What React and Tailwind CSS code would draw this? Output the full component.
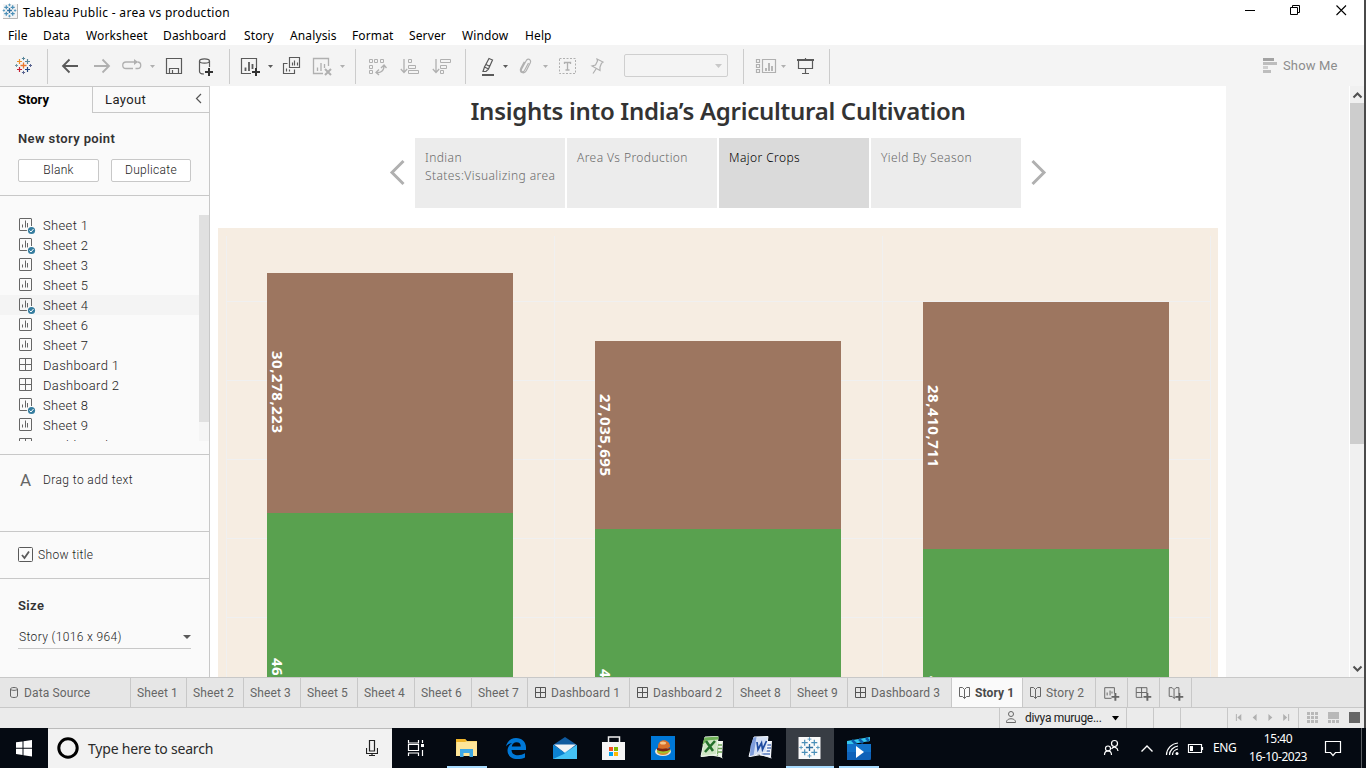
import React from "react";

/* Draws in window coordinates: x, y, w, h is the part of the window the drawing takes. */
function Art({ x, y, w, h, children, className = "" }) {
  return (
    <svg width={w} height={h} viewBox={`${x} ${y} ${w} ${h}`} fill="none" className={"block shrink-0 " + className}>
      {children}
    </svg>
  );
}

const DARK = "#5a5a5a";
const DIM = "#b0b0b0";

const Plus = ({ x, y, r, c, s = 1 }) => (
  <path d={`M${x - r} ${y}H${x + r}M${x} ${y - r}V${y + r}`} stroke={c} strokeWidth={s} />
);
const Caret = ({ x, c = DIM, y = 65 }) => <path d={`M${x - 2.5} ${y}h5l-2.5 3z`} fill={c} />;
const Sep = ({ x }) => <path d={`M${x} 49V84`} stroke="#cccccc" />;

function TableauMark({ x, y, k = 1, blue }) {
  const cs = blue
    ? ["#2f6f9f", "#4a8fb8", "#4a8fb8", "#4a8fb8", "#4a8fb8", "#5c9cc0", "#5c9cc0", "#5c9cc0", "#5c9cc0"]
    : ["#e8762c", "#eb912c", "#5b879b", "#c72035", "#1f457e", "#59879b", "#7199a6", "#5b6591", "#5b6591"];
  return (
    <g>
      <Plus x={x} y={y} r={3 * k} c={cs[0]} s={1.3} />
      <Plus x={x - 4 * k} y={y - 4 * k} r={2.5 * k} c={cs[1]} s={1.2} />
      <Plus x={x + 4 * k} y={y - 4 * k} r={2.5 * k} c={cs[2]} s={1.2} />
      <Plus x={x - 4 * k} y={y + 4 * k} r={2.5 * k} c={cs[3]} s={1.2} />
      <Plus x={x + 4 * k} y={y + 4 * k} r={2.5 * k} c={cs[4]} s={1.2} />
      <Plus x={x} y={y - 7 * k} r={1.6 * k} c={cs[5]} />
      <Plus x={x - 7 * k} y={y} r={1.5 * k} c={cs[6]} />
      <Plus x={x + 7 * k} y={y} r={1.5 * k} c={cs[7]} />
      <Plus x={x} y={y + 7 * k} r={1.6 * k} c={cs[8]} />
    </g>
  );
}

function TitleBar() {
  return (
    <div className="flex h-[25px] items-start bg-white">
      <Art x={0} y={0} w={23} h={25}>
        <rect x="3" y="4" width="15" height="15" fill="#f4f4f4" />
        <path d="M17.5 4V18.5H3" stroke="#b5b5b5" />
        <TableauMark x={9.5} y={10.5} k={0.8} blue />
      </Art>
      <span className="h-[25px] leading-[26px] text-[12px] tracking-[0.026em] text-black">Tableau Public - area vs production</span>
      <div className="flex-1" />
      <Art x={1236} y={0} w={128} h={25}>
        <path d="M1245 10.5h10" stroke="#000" />
        <path d="M1290.5 7.5h7v7h-7zM1292.500 7.500V5.500h7v7h-2" stroke="#000" />
        <path d="M1336.500 5.500l9.500 9.500M1346 5.500l-9.500 9.500" stroke="#000" strokeWidth="1.1" />
      </Art>
    </div>
  );
}

const menus = [
  ["File", "w-[35px]"], ["Data", "w-[43px]"], ["Worksheet", "w-[77px]"], ["Dashboard", "w-[81px]"],
  ["Story", "w-[46px]"], ["Analysis", "w-[62px]"], ["Format", "w-[57px]"], ["Server", "w-[53px]"],
  ["Window", "w-[63px]"], ["Help", "w-[40px]"],
];

function MenuBar() {
  return (
    <div className="flex h-5 bg-white pl-2 text-[12px] leading-[22px] tracking-[0.01em] text-black">
      {menus.map(([m, w]) => <span key={m} className={w}>{m}</span>)}
    </div>
  );
}

function Toolbar() {
  return (
    <div className="flex h-[41px] items-center bg-[#f4f4f4]">
      <Art x={0} y={45} w={48} h={41}><TableauMark x={23.5} y={65.5} /><Sep x={47.5} /></Art>
      <Art x={48} y={45} w={37} h={41}>
        <path d="M62.500 66H78M69.500 59.500L63 66l6.500 6.500" stroke={DARK} strokeWidth="1.800" />
      </Art>
      <Art x={85} y={45} w={33} h={41}>
        <path d="M94 66h15.500M102.500 59.500L109 66l-6.500 6.500" stroke={DIM} strokeWidth="1.800" />
      </Art>
      <Art x={118} y={45} w={40} h={41}>
        <path d="M135.500 68.500h2a3 3 0 0 0 0-6.500M137 62h-11a3.200 3.200 0 0 0 0 6.500h7" stroke={DIM} strokeWidth="1.300" />
        <path d="M134 59l4 3-4 3z" fill={DIM} /><Caret x={152.500} />
      </Art>
      <Art x={158} y={45} w={32} h={41}>
        <path d="M166.500 58.500h15v15h-15zM169.500 73.500v-5h9v5M172.500 73v-3" stroke={DARK} strokeWidth="1.200" />
      </Art>
      <Art x={190} y={45} w={40} h={41}>
        <path d="M199.500 61v10.500c0 1.500 2 2.500 4.500 2.500M209.500 61v6" stroke={DARK} strokeWidth="1.200" />
        <ellipse cx="204.500" cy="61" rx="5" ry="2.200" stroke={DARK} strokeWidth="1.200" />
        <Plus x={209} y={72} r={4} c="#333" s={2} /><Sep x={229.500} />
      </Art>
      <Art x={230} y={45} w={46} h={41}>
        <path d="M251 73.500h-9.500v-15h15V68" stroke={DARK} strokeWidth="1.200" />
        <path d="M245.500 71v-3.500M249 71v-9M252.500 69v-5" stroke={DARK} strokeWidth="1.800" />
        <Plus x={256} y={72} r={4} c="#333" s={2} /><Caret x={270.500} c={DARK} />
      </Art>
      <Art x={276} y={45} w={32} h={41}>
        <path d="M289.500 57.500h10v10h-10zM287.500 63.500h-4v10h11v-4M286.500 71.500v-3M289.500 71.500v-2M292.500 65.500v-3M294.500 65.500v-5M297.500 65.500v-3" stroke={DARK} strokeWidth="1.150" />
      </Art>
      <Art x={308} y={45} w={48} h={41}>
        <path d="M323 73.500h-9.500v-15h15V66M317.500 71v-3.500M321 71v-8M324.500 68v-4" stroke={DIM} strokeWidth="1.300" />
        <path d="M325 69l6 6M331 69l-6 6" stroke={DIM} strokeWidth="2" /><Caret x={342.500} /><Sep x={355.500} />
      </Art>
      <Art x={356} y={45} w={36} h={41}>
        <path d="M369.500 59.500h3v3h-3zM374.500 59.500h3v3h-3zM380.500 59.500h3v3h-3zM369.500 65.500h3v3h-3zM369.500 70.500h3v3h-3z" stroke={DIM} />
        <path d="M376 72.500c4 .5 8-1 8-6.500M381 68l3-3 2.500 3M379 69.500l-3 3 3 2.500" stroke={DIM} strokeWidth="1.300" />
      </Art>
      <Art x={392} y={45} w={33} h={41}>
        <path d="M404 59v13M400.800 69l3.200 3.500 3.200-3.500" stroke={DIM} strokeWidth="1.300" />
        <path d="M408.500 59.500h3v3h-3zM408.500 65.500h7v3h-7zM408.500 70.500h10v3h-10z" stroke={DIM} />
      </Art>
      <Art x={425} y={45} w={41} h={41}>
        <path d="M436 59v13M432.800 69l3.200 3.500 3.200-3.500" stroke={DIM} strokeWidth="1.300" />
        <path d="M440.500 59.500h10v3h-10zM440.500 65.500h6v3h-6zM440.500 70.500h3v3h-3z" stroke={DIM} /><Sep x={465.500} />
      </Art>
      <Art x={466} y={45} w={46} h={41}>
        <path d="M489 58.500l3.500 1.500-4 9-4-2zM484.500 67l-1.500 4.500h3l2.500-2.500M486 64.500l4 2" stroke={DARK} strokeWidth="1.200" />
        <path d="M482 75h12" stroke={DARK} strokeWidth="2" /><Caret x={505.500} c={DARK} />
      </Art>
      <Art x={512} y={45} w={40} h={41}>
        <path d="M528.500 63l-4 7.500c-1.500 2.500-4 1-3-1.200l4.500-8.300c1.500-3.500 5.800-1.500 4.300 1.800l-4 8c-2.300 4-7.500 1.500-5.500-2.500l3.500-6.500" stroke={DIM} strokeWidth="1.200" /><Caret x={545.500} />
      </Art>
      <Art x={552} y={45} w={32} h={41}>
        <rect x="559.500" y="58.500" width="16" height="15" stroke={DIM} strokeDasharray="2 1.500" />
        <path d="M564.500 64v-1.500h6V64M567.500 62.500v7.500M565.500 70h4" stroke={DIM} strokeWidth="1.300" />
      </Art>
      <Art x={584} y={45} w={40} h={41}>
        <path d="M597 59l6 3-1.500 1.200-1.500 3.800v3.500l-8-4.500 3.500-1 2-4zM596 69l-3 4.500" stroke={DIM} strokeWidth="1.200" />
      </Art>
      <div className="flex h-[23px] w-[104px] items-center justify-end rounded-[2px] border border-[#cfcfcf] pr-[5px]">
        <svg width="7" height="4"><path d="M0 0h7L3.500 4z" fill="#c8c8c8" /></svg>
      </div>
      <Art x={728} y={45} w={62} h={41}>
        <Sep x={743.500} />
        <path d="M756.500 59.500h3v3h-3zM756.500 64.500h3v3h-3zM756.500 69.500h3v3h-3zM762.500 59.500h13v13h-13z" stroke={DIM} strokeWidth="1.200" />
        <path d="M766 71v-3M769 71v-8M772 71v-5" stroke={DIM} strokeWidth="1.800" /><Caret x={783.500} />
      </Art>
      <Art x={790} y={45} w={41} h={41}>
        <path d="M797 60h17" stroke={DARK} strokeWidth="2" />
        <path d="M798.500 60v8.500h14V60M805.500 58v1M805.500 68.500V73M802 73.500h7" stroke={DARK} strokeWidth="1.200" /><Sep x={829.500} />
      </Art>
      <div className="flex-1" />
      <Art x={1263} y={45} w={20} h={41}>
        <path d="M1263 58h11v3h-11z" fill="#a3a3a3" /><path d="M1263 62h14v3h-14zM1263 70h8v3h-8z" fill="#bdbdbd" /><path d="M1263 66h5v3h-5z" fill="#cfcfcf" />
      </Art>
      <span className="w-[81px] font-[Roboto] text-[13px] tracking-[0.01em] text-[#8c8c8c]">Show Me</span>
    </div>
  );
}

const SheetIcon = ({ check }) => (
  <svg width="18" height="20" fill="none" className="block">
    <rect x="1.500" y="3.500" width="12" height="12" rx=".5" stroke="#666" />
    <path d="M4.500 12.500v-3M7.500 12.500v-7M9.500 12.500V8" stroke="#666" />
    {check && (
      <g>
        <circle cx="13.500" cy="15.500" r="4.600" fill="#fafafa" /><circle cx="13.500" cy="15.500" r="3.600" fill="#357d9f" />
        <path d="M11.500 15.500l1.500 1.500 2.500-3" stroke="#fff" />
      </g>
    )}
  </svg>
);
const GridIcon = () => (
  <svg width="18" height="20" fill="none" className="block">
    <path d="M1.500 3.500h12v12h-12zM7.500 3.500v12M1.500 9.500h12" stroke="#666" />
  </svg>
);

const items = [
  ["Sheet 1", 1], ["Sheet 2", 1], ["Sheet 3"], ["Sheet 5"], ["Sheet 4", 1], ["Sheet 6"], ["Sheet 7"],
  ["Dashboard 1"], ["Dashboard 2"], ["Sheet 8", 1], ["Sheet 9"], ["Dashboard 3"],
];

function Sidebar() {
  return (
    <aside className="flex w-[210px] shrink-0 flex-col border-r border-t border-[#c8c8c8] bg-[#fafafa] font-[Roboto] font-light text-[#222]">
      <div className="flex h-[26px] text-[13px] leading-[25px]">
        <div className="w-[92px] pl-[18px] font-bold text-black">Story</div>
        <div className="flex flex-1 justify-between border-b border-l border-[#c8c8c8] pl-3 font-normal tracking-[0.03em] text-[#222]">
          <span>Layout</span>
          <svg width="16" height="24" fill="none"><path d="M8 7L3.500 11.500 8 16" stroke="#555" strokeWidth="1.200" /></svg>
        </div>
      </div>
      <div className="flex h-[83px] flex-col border-b border-[#c8c8c8] px-[18px] pt-[16px]">
        <div className="h-[30px] text-[13px] font-semibold leading-[20px] tracking-[0.03em] text-[#333]">New story point</div>
        <div className="flex gap-3 text-center text-[12px] leading-[20px] tracking-[0.026em]">
          <div className="h-[23px] w-[81px] rounded-[2px] border border-[#c8c8c8] bg-white">Blank</div>
          <div className="h-[23px] w-[80px] rounded-[2px] border border-[#c8c8c8] bg-white">Duplicate</div>
        </div>
      </div>
      <div className="flex h-[259px] border-b border-[#c8c8c8] pt-[19px]">
        <div className="h-[226px] w-[199px] overflow-hidden text-[13px] leading-[22px] tracking-[0.026em]">
          {items.map(([t, c], i) => (
            <div key={t} className={"flex h-5 pl-[18px] " + (i === 4 ? "bg-[#f4f4f4]" : "")}>
              <div className="w-[25px]">{t[0] === "D" ? <GridIcon /> : <SheetIcon check={c} />}</div>
              <span>{t}</span>
            </div>
          ))}
        </div>
        <div className="h-[226px] w-[10px] bg-[#f5f5f5]"><div className="h-[207px] bg-[#e0e0e0]" /></div>
      </div>
      <div className="flex h-[77px] items-start border-b border-[#c8c8c8] pl-[20px] pt-[15px] leading-[20px]">
        <span className="w-[23px] text-[17px] font-normal text-[#666]">A</span>
        <span className="text-[12px] tracking-[0.034em]">Drag to add text</span>
      </div>
      <div className="flex h-[47px] items-center border-b border-[#c8c8c8] pl-[18px] text-[12px]">
        <svg width="20" height="16" fill="none"><rect x=".5" y=".5" width="14" height="14" rx="1" stroke="#5a5a5a" /><path d="M4 8l2.500 3L11 4.500" stroke="#5a5a5a" strokeWidth="1.800" /></svg>
        <span className="tracking-[0.03em]">Show title</span>
      </div>
      <div className="flex flex-col px-[18px] pt-[16px]">
        <div className="h-[31px] text-[13px] font-semibold leading-[22px] tracking-[0.03em] text-[#333]">Size</div>
        <div className="flex h-[23px] items-center justify-between border-b border-[#c8c8c8] pl-px text-[12px] tracking-[0.03em]">
          <span>Story (1016 x 964)</span>
          <svg width="8" height="4"><path d="M0 0h8L4 4z" fill="#5a5a5a" /></svg>
        </div>
      </div>
    </aside>
  );
}

const points = ["Indian States:Visualizing area", "Area Vs Production", "Major Crops", "Yield By Season"];
const bars = [
  { x: 267, top: 273, mid: 513, label: "30,278,223", y: 351, low: "46,328,910", ly: 658 },
  { x: 595, top: 341, mid: 529, label: "27,035,695", y: 394, low: "45,112,608", ly: 669 },
  { x: 923, top: 302, mid: 549, label: "28,410,711", y: 385, low: "44,907,215", ly: 676 },
];

function Story() {
  return (
    <main className="flex w-[1016px] shrink-0 flex-col bg-white font-['Noto_Sans']">
      <h1 className="h-[52px] text-center text-[24px] font-semibold leading-[50px] tracking-[-0.012em] text-[#333]">Insights into India’s Agricultural Cultivation</h1>
      <div className="flex h-[90px] items-start justify-center text-[12px] font-light leading-[18px] text-[#6a6a6a]">
        <Art x={386} y={138} w={29} h={70}><path d="M403.500 161L392 172.500l11.500 11.500" stroke="#b0b0b0" strokeWidth="3" /></Art>
        <div className="flex gap-[2px]">
          {points.map((p, i) => (
            <div key={p} className={"h-[70px] w-[150px] pl-[10px] pt-[11px] tracking-[0.035em] " + (i === 2 ? "bg-[#dadada] text-black" : "bg-[#ececec]")}>{p}</div>
          ))}
        </div>
        <Art x={1021} y={138} w={29} h={70}><path d="M1032.500 161l11.500 11.500-11.500 11.500" stroke="#b0b0b0" strokeWidth="3" /></Art>
      </div>
      <div className="pl-2">
        <Art x={218} y={228} w={1000} h={449} className="bg-[#f6ede2]">
          <path d="M226.500 236V677M554.500 236V677M882.500 236V677M1210.500 236V677" stroke="#f0f0f0" />
          <path d="M227 301.500H1210M227 380.500H1210M227 459.500H1210M227 538.500H1210M227 617.500H1210" stroke="#f0f0f0" />
          {bars.map((b) => (
            <g key={b.x}>
              <rect x={b.x} y={b.top} width="246" height={b.mid - b.top} fill="#9d7660" />
              <rect x={b.x} y={b.mid} width="246" height={677 - b.mid} fill="#59a14f" />
              <g className="fill-white font-['Noto_Sans'] text-[15px] font-bold">
                <text transform={`translate(${b.x + 5} ${b.y}) rotate(90)`} textLength="82" lengthAdjust="spacing">{b.label}</text>
                <text transform={`translate(${b.x + 5} ${b.ly}) rotate(90)`} textLength="82" lengthAdjust="spacing">{b.low}</text>
              </g>
            </g>
          ))}
        </Art>
      </div>
    </main>
  );
}

function ScrollBar() {
  return (
    <div className="flex w-[15px] flex-col border-l border-white bg-[#f0f0f0]">
      <Art x={1350} y={86} w={14} h={17}><path d="M1353.500 97.500l4-4 4 4" stroke="#505050" strokeWidth="2" /></Art>
      <div className="h-[341px] bg-[#cdcdcd]" />
      <div className="flex-1" />
      <Art x={1350} y={660} w={14} h={17}><path d="M1353.500 666.500l4 4 4-4" stroke="#505050" strokeWidth="2" /></Art>
    </div>
  );
}

const tabs = [
  ["Sheet 1", "w-[56px]"], ["Sheet 2", "w-[57px]"], ["Sheet 3", "w-[57px]"], ["Sheet 5", "w-[57px]"],
  ["Sheet 4", "w-[57px]"], ["Sheet 6", "w-[57px]"], ["Sheet 7", "w-[56px]"], ["Dashboard 1", "w-[102px]"],
  ["Dashboard 2", "w-[104px]"], ["Sheet 8", "w-[57px]"], ["Sheet 9", "w-[57px]"], ["Dashboard 3", "w-[104px]"],
  ["Story 1", "w-[71px]"], ["Story 2", "w-[73px]"],
];
const BOOK = "M.5 1.500h3l2 2 2-2h3v9h-3l-2 2-2-2h-3zM5.500 3.500v9";

function Tabs() {
  return (
    <div className="flex h-[31px] border-b border-t border-[#c8c8c8] bg-[#e6e6e6] font-[Roboto] text-[12px] leading-[31px] tracking-[0.01em] text-[#666]">
      <div className="flex w-[131px] items-center border-r border-[#c8c8c8] pl-[10px]">
        <svg width="14" height="14" fill="none"><path d="M.5 3v7c0 2 7 2 7 0V3c0-2-7-2-7 0 0 1.800 7 1.800 7 0" stroke="#666" /></svg>
        <span className="h-[29px]">Data Source</span>
      </div>
      {tabs.map(([t, w]) => {
        const active = t === "Story 1";
        return (
          <div key={t} className={"flex items-center whitespace-nowrap border-r border-[#c8c8c8] pl-[6px] " + w + (active ? " bg-[#fafafa] font-bold text-[#4a4a4a]" : "")}>
            {t[0] === "D" && <svg width="16" height="14" fill="none" className="ml-px shrink-0"><path d="M.5 1.500h10v10H.5zM5.500 1.500v10M.5 6.500h10" stroke="#555" /></svg>}
            {t.startsWith("Story") && <svg width="16" height="14" fill="none" className="ml-px shrink-0"><path d={BOOK} stroke="#666" /></svg>}
            <span className="h-[29px]">{t}</span>
          </div>
        );
      })}
      <Art x={1096} y={678} w={32} h={29} className="border-r border-[#c8c8c8]">
        <path d="M1112 698.500h-7v-11h10v6M1107.500 695.500v-3M1110.500 695.500v-5M1112.500 693.500v-2" stroke="#666" /><Plus x={1116} y={697} r={4} c="#666" s={2} />
      </Art>
      <Art x={1128} y={678} w={32} h={29} className="border-r border-[#c8c8c8]">
        <path d="M1143 697.500h-6.500v-10h11v6M1142 687.500v10M1136.500 692.500h11" stroke="#666" /><Plus x={1148} y={697} r={4} c="#666" s={2} />
      </Art>
      <Art x={1160} y={678} w={32} h={29} className="border-r border-[#c8c8c8]">
        <path d="M1176 697.500l-1.500 1-2-2h-3v-9h3l2 2 2-2h3v6M1174.500 689.500v9" stroke="#666" /><Plus x={1180} y={697} r={4} c="#666" s={2} />
      </Art>
    </div>
  );
}

function StatusBar() {
  return (
    <div className="flex h-5 bg-[#ebebeb] font-[Roboto] text-[11px] leading-[20px] text-[#222]">
      <div className="w-[1000px] border-r border-[#c8c8c8]" />
      <div className="flex w-[127px] items-center border-r border-[#c8c8c8] pl-[6px]">
        <svg width="19" height="16" fill="none"><circle cx="5" cy="4" r="2.500" stroke="#666" /><path d="M.5 12.500c-.5-5 9.500-5 9 0z" stroke="#666" /></svg>
        <span className="w-[87px] text-[12px] tracking-[-0.025em]">divya muruge...</span>
        <svg width="7" height="5"><path d="M0 0h7L3.500 4.500z" fill="#000" /></svg>
      </div>
      <div className="w-[27px] border-r border-[#c8c8c8]" />
      <div className="w-[27px] border-r border-[#c8c8c8]" />
      <div className="w-[47px] border-r border-[#c8c8c8]" />
      <Art x={1228} y={708} w={71} h={20} className="border-r border-[#c8c8c8]">
        <path d="M1241.500 714l-4 3.500 4 3.500zM1257 714l-4 3.500 4 3.500zM1269 714l4 3.500-4 3.500zM1284 714l4 3.500-4 3.500z" fill="#b0b0b0" /><path d="M1236.500 714v7M1289.500 714v7" stroke="#b0b0b0" />
      </Art>
      <Art x={1299} y={708} w={65} h={20}>
        <path d="M1307 712h3v3h-3zM1311 712h3v3h-3zM1315 712h3v3h-3zM1307 716h3v3h-3zM1311 716h3v3h-3zM1315 716h3v3h-3zM1307 720h3v3h-3zM1311 720h3v3h-3zM1315 720h3v3h-3zM1328 712h11v7h-11zM1328 720h3v3h-3zM1332 720h3v3h-3zM1336 720h3v3h-3z" fill="#b8b8b8" />
        <path d="M1349 712h11v11h-11z" fill="#666" />
      </Art>
    </div>
  );
}

function TaskBar() {
  return (
    <div className="flex h-10 items-center bg-[#050a12] text-white">
      <Art x={0} y={728} w={48} h={40}>
        <path d="M16 742.300l6.500-.9v6.300H16zM23.500 741.200l8.500-1.200v7.700h-8.500zM16 748.700h6.500v6.300l-6.500-.9zM23.500 748.700H32v7.700l-8.500-1.200z" fill="#fff" />
      </Art>
      <div className="flex h-10 w-[344px] items-center border-t border-[#bbb] bg-[#f2f2f2] pl-2 text-[#2b2b2b]">
        <svg width="32" height="24" fill="none"><circle cx="12" cy="11" r="9.200" stroke="#000" strokeWidth="3" /></svg>
        <span className="w-[278px] text-[14px] tracking-[-0.014em]">Type here to search</span>
        <svg width="12" height="18" fill="none"><path d="M3.500 .5h5v10.500h-5zM.5 8v5.500h11V8M6 13.500V16M3 15.500h6" stroke="#222" strokeWidth="1.200" /></svg>
      </div>
      <Art x={392} y={728} w={55} h={40}>
        <path d="M408.500 740v3h10v-3M408.500 744.500h10v6h-10zM408.500 756v-3h10v3M422.500 740v3M422.500 750v6" stroke="#fff" strokeWidth="1.200" /><path d="M421 744h3v3h-3z" fill="#fff" />
      </Art>
      <Art x={447} y={728} w={48} h={40}>
        <path d="M456 739h9l2 2h10v15h-21z" fill="#f7d673" /><path d="M456 739h9l1.500 2-1.500 1h-9z" fill="#f0b429" /><path d="M457 742h20v14h-21z" fill="#ffe699" />
        <path d="M460 757v-8h13v8h-3.500v-4h-6v4z" fill="#3ea9e5" /><path d="M447 766h40v2h-40z" fill="#a9dcff" />
      </Art>
      <Art x={495} y={728} w={50} h={40}>
        <path d="M506 746.500c1-5 5-8.500 10-8.500 6 0 10 4 10 9.500v2.500h-14.500c.3 4 3 5.200 6.500 5.200 2.500 0 4.800-.7 7-2v4.200c-2 1.200-4.700 1.700-7.500 1.700-6.500 0-10-4-10-8.500 0-3.300 2-6.200 5-7.600-3 .3-5 1.500-6.500 3.500zM511.800 746.500h9c0-2.800-1.500-4.300-4.200-4.300-2.600 0-4.500 1.800-4.800 4.300z" fill="#0078d7" fillRule="evenodd" />
      </Art>
      <Art x={545} y={728} w={48} h={40}>
        <path d="M553 745l12-8 12 8v14h-24z" fill="#0f5a9f" /><path d="M554 744.500h22L565 753z" fill="#f0f2f5" /><path d="M553 745l12 8.500 12-8.500v14h-24z" fill="#2bb5ee" /><path d="M553 759l24-14v14z" fill="#55cdfb" opacity=".6" /><path d="M553 745l12 8.500-12 5.500z" fill="#0c82d1" />
      </Art>
      <Art x={593} y={728} w={49} h={40}>
        <path d="M608.500 743v-6h11v6" stroke="#f0f0f0" strokeWidth="1.500" /><path d="M602 742h23v18h-23z" fill="#f5f5f5" />
        <path d="M609 747h4v4h-4z" fill="#f25022" /><path d="M614 747h4v4h-4z" fill="#7fba00" /><path d="M609 752h4v4h-4z" fill="#00a4ef" /><path d="M614 752h4v4h-4z" fill="#ffb900" />
      </Art>
      <Art x={642} y={728} w={49} h={40}>
        <path d="M651 736h24v24h-24z" fill="#0078d7" />
        <ellipse cx="663" cy="751.500" rx="8" ry="4.500" fill="#ece6dc" /><ellipse cx="663" cy="751.500" rx="6" ry="3.500" fill="#d98b2f" />
        <path d="M657 748c2-1 4 1 6 0s4 1 7 0v2.500c-5 2-8 2-13 0z" fill="#7d2413" /><path d="M657 750c3 2 10 2 13-.5l.5 1.500c-3 3-10 3-13.500 1z" fill="#9fc52e" /><path d="M658 748c-1-10 12-10 12-1-3 2-9 2-12 1z" fill="#d8702a" /><ellipse cx="663" cy="743" rx="3" ry="1.500" fill="#f6c48a" />
      </Art>
      <Art x={691} y={728} w={49} h={40}>
        <path d="M713 741h10l-1 16.500-11-2z" fill="#f3f8ef" /><path d="M714 745h8M714 748.500h8M714 752h8M717.500 742v14" stroke="#6aa354" strokeWidth="1.300" />
        <path d="M705 737l13-.5-1.500 18-15.500 2z" fill="#cfe5c4" stroke="#f1f8ee" /><path d="M702 746l2.500-8.500 14-1v3l-12 1z" fill="#6fb258" />
        <path d="M706 741l7 10M715 741l-10 11" stroke="#24702c" strokeWidth="2.600" /><path d="M701 756.500l16-2 5.500 3.500" stroke="#e9f3e4" />
      </Art>
      <Art x={740} y={728} w={46} h={40}>
        <path d="M762 741h10l-1 16.500-11-2z" fill="#f3f6fc" /><path d="M765 745h6M765 748h6M761 751h9M761 754h9" stroke="#5578bd" strokeWidth="1.300" />
        <path d="M754 737l14-.5-2 15.500-17 4.500z" fill="#d3dff5" stroke="#f3f6fc" /><path d="M750.500 746l3-8.500 3-.5-3 18.500-3.500.5z" fill="#7f9ddb" />
        <path d="M757 742l1 7.500 3.500-6.500 1 6.500 4-8.500" stroke="#1f4ba0" strokeWidth="1.700" /><path d="M750 756.500l11-2 10.500 3.500" stroke="#f0f4fc" />
      </Art>
      <Art x={786} y={728} w={48} h={40} className="bg-[#383d44]">
        <path d="M798.500 737h22v22h-22z" fill="#fafafa" /><TableauMark x={809.500} y={747.500} k={1.200} blue /><path d="M786 766h48v2h-48z" fill="#a9dcff" />
      </Art>
      <Art x={834} y={728} w={58} h={40}>
        <path d="M847 741l23-4v4l-23 4z" fill="#35c6ee" /><path d="M852 740l4 4M859 739l4 4M866 738l3 3" stroke="#0b5cab" strokeWidth="2.500" /><path d="M847 744h24v14q0 2-2 2h-22z" fill="#1272c9" /><path d="M847 752h24v8h-24z" fill="#0d58ad" opacity=".6" /><path d="M856 746l8 6-8 6z" fill="#fff" /><path d="M839 766h40v2h-40z" fill="#a9dcff" />
      </Art>
      <div className="flex-1" />
      <Art x={1100} y={728} w={113} h={40}>
        <g stroke="#fff" strokeWidth="1.200">
          <circle cx="1114.500" cy="743.500" r="3" /><circle cx="1108" cy="748.500" r="2.500" /><path d="M1104.500 755c0-5.500 7-5.500 7 0M1111.500 749c2-3 6-2 6.500 2" />
          <path d="M1141.500 751.500l5.500-5.500 5.500 5.500" strokeWidth="1.400" />
          <path d="M1166.500 755c0-6 5-11.500 11.500-12M1169.500 755c0-4.500 4-8.500 8.500-9M1172.500 755c0-3 2.500-5.500 5.500-6" />
          <path d="M1188.500 744.500h13v8h-13zM1202.500 747v3" />
        </g>
        <circle cx="1177" cy="753.500" r="1.500" fill="#fff" /><path d="M1190 746h3v5h-3z" fill="#fff" />
      </Art>
      <span className="w-[35px] text-[12px] tracking-[-0.035em]">ENG</span>
      <div className="w-[60px] text-center text-[12px] leading-[18px] tracking-[-0.04em]"><div>15:40</div><div>16-10-2023</div></div>
      <Art x={1308} y={728} w={58} h={40}>
        <path d="M1325.500 741.500h15v11h-5l-2.500 3-2.500-3h-5z" stroke="#fff" strokeWidth="1.200" /><path d="M1361.500 728v40" stroke="#5a5e63" />
      </Art>
    </div>
  );
}

export default function App() {
  return (
    <div className="h-[768px] w-[1366px] overflow-hidden font-['Noto_Sans',sans-serif]">
      <div className="flex h-[728px] flex-col border-r-2 border-[#4a4a4a]">
        <TitleBar />
        <MenuBar />
        <Toolbar />
        <div className="flex h-[591px] overflow-hidden bg-[#f4f4f4]">
          <Sidebar />
          <Story />
          <div className="flex-1" />
          <ScrollBar />
        </div>
        <Tabs />
        <StatusBar />
      </div>
      <TaskBar />
    </div>
  );
}
